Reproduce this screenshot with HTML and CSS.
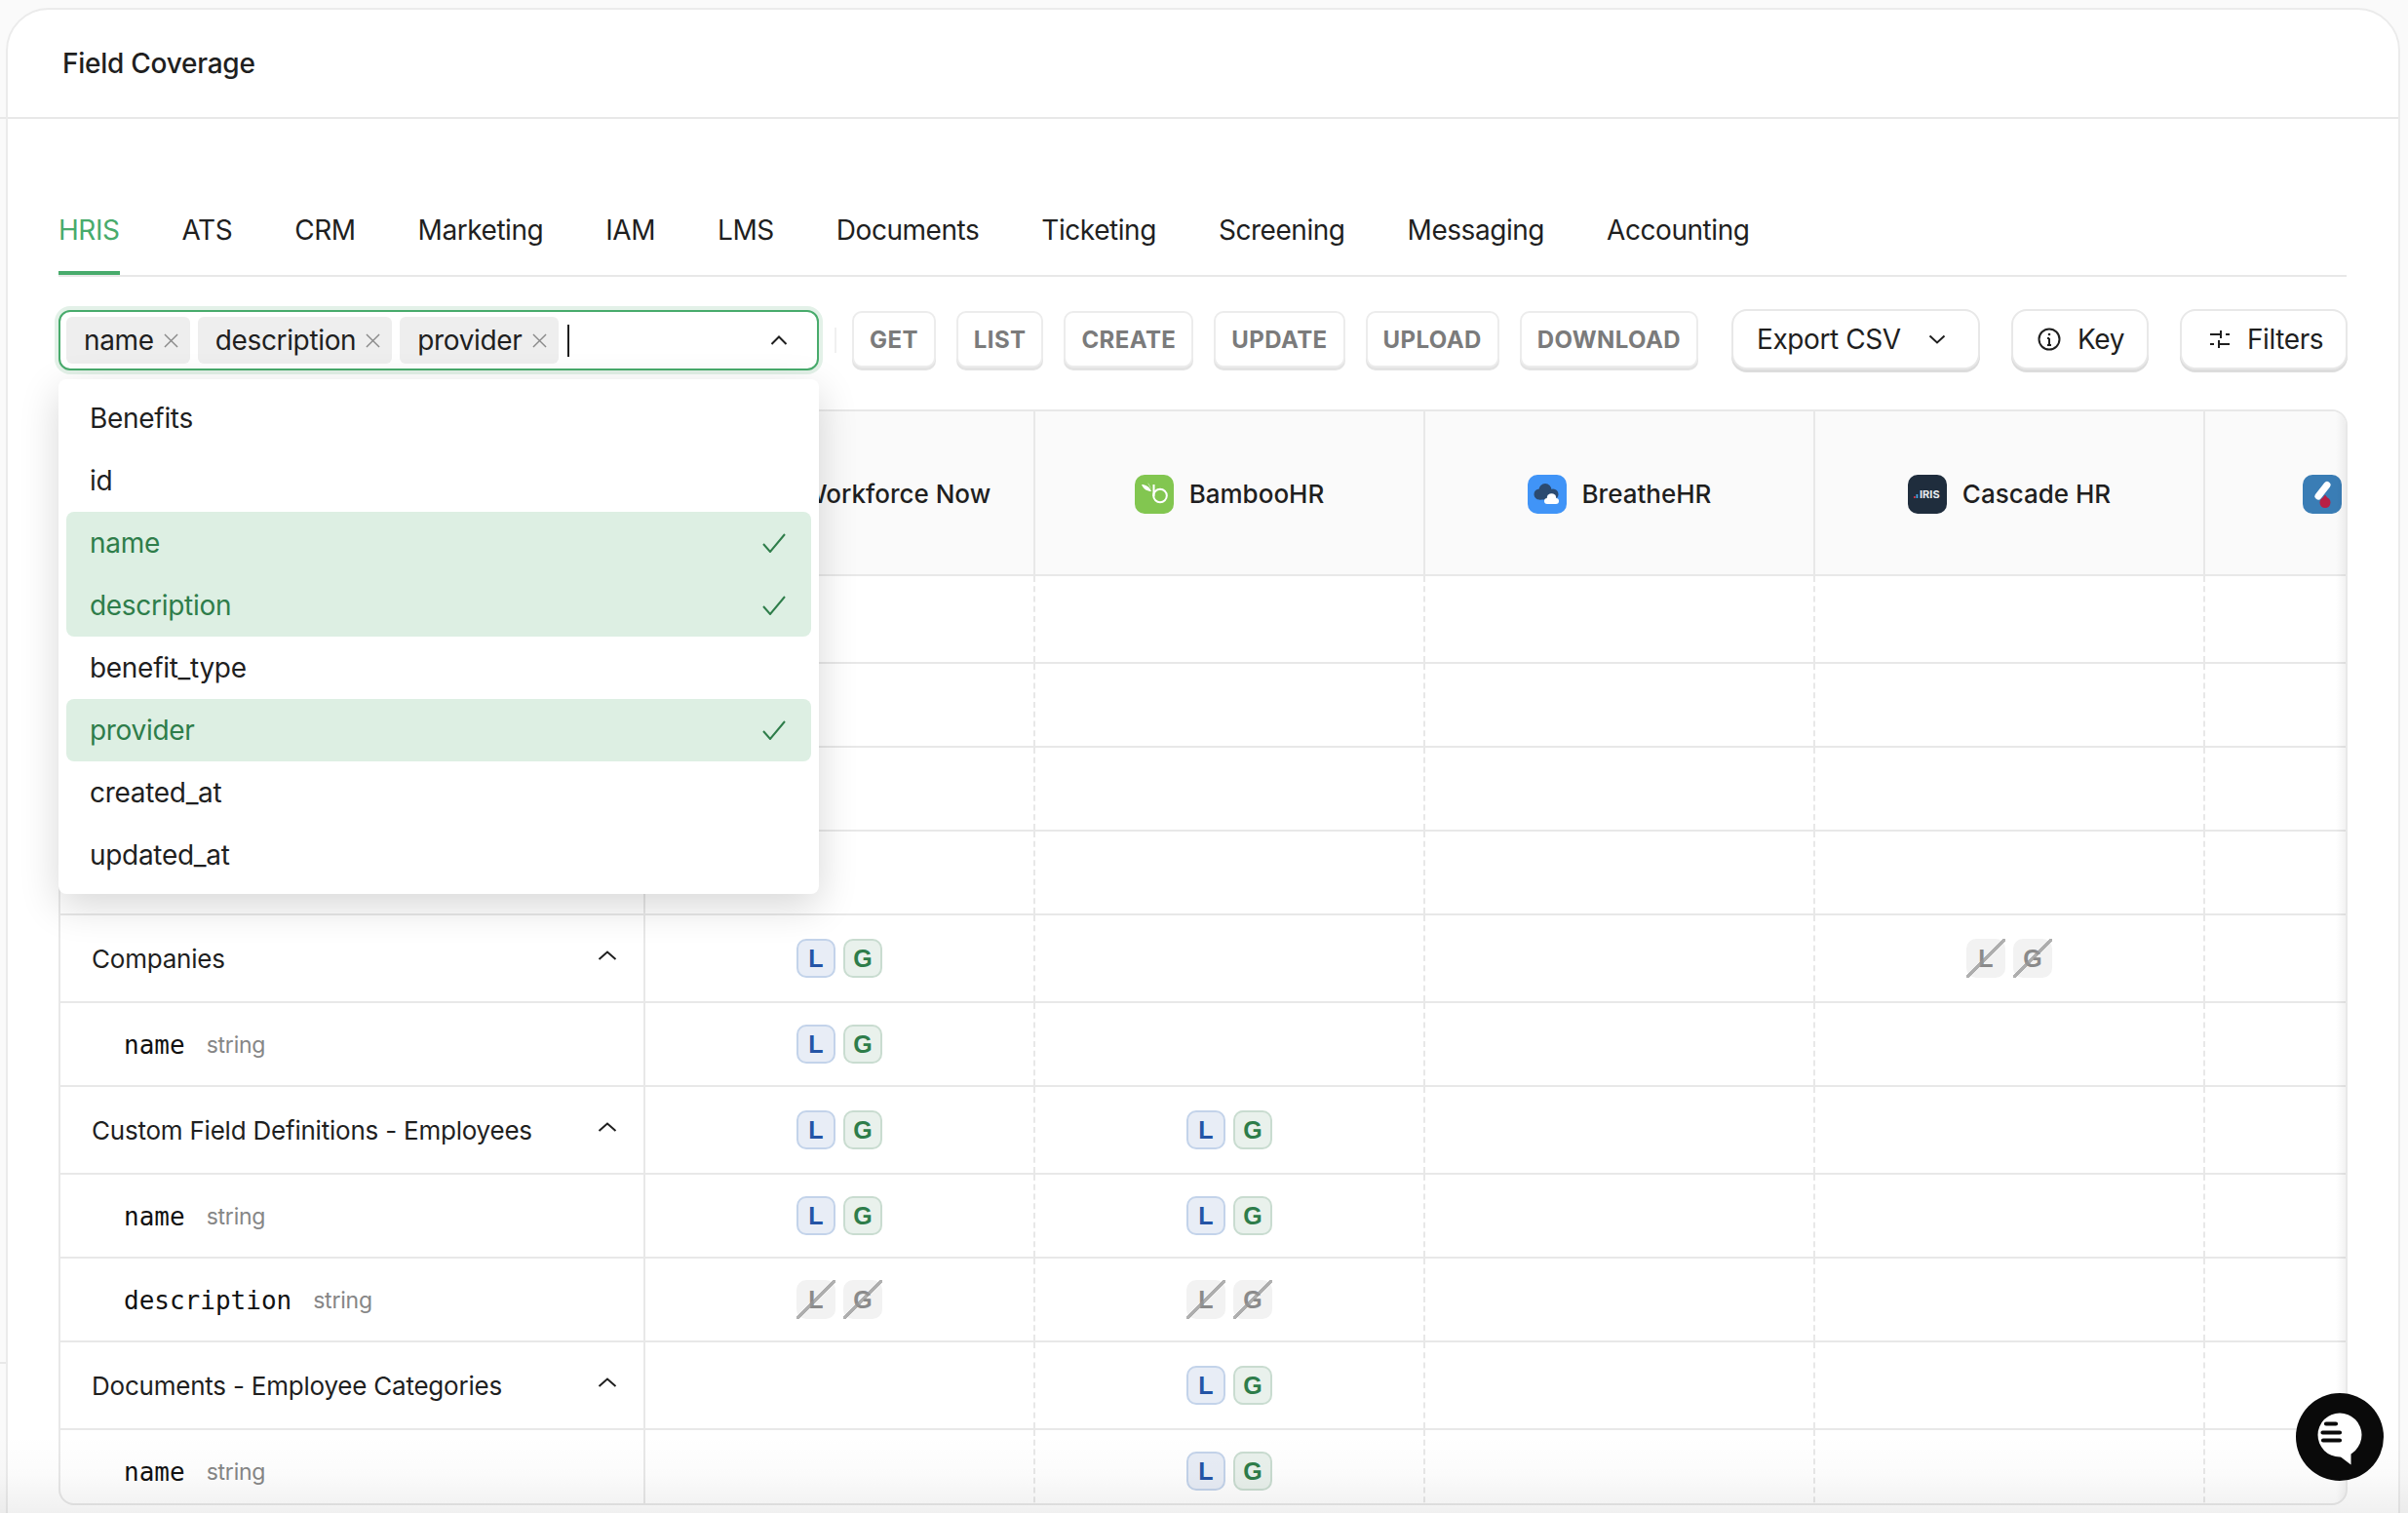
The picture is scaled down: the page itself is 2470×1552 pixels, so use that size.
FILE: index.html
```html
<!DOCTYPE html>
<html lang="en">
<head>
<meta charset="utf-8">
<title>Field Coverage</title>
<link rel="stylesheet" href="styles.css">
</head>
<body>
<div class="page">
  <div class="rail"><div class="rail-a"></div><div class="rail-b"></div></div>
  <main class="card">
    <header class="card-head"><h1 class="title">Field Coverage</h1></header>
    <section class="content">
      <nav class="tabs">
        <a class="tab active">HRIS</a><a class="tab">ATS</a><a class="tab">CRM</a><a class="tab">Marketing</a><a class="tab">IAM</a><a class="tab">LMS</a><a class="tab">Documents</a><a class="tab">Ticketing</a><a class="tab">Screening</a><a class="tab">Messaging</a><a class="tab">Accounting</a>
      </nav>
      <div class="toolbar">
        <div class="multi">
          <div class="input">
            <span class="tag">name<svg class="x" viewBox="0 0 16 16"><path d="M1 1l14 14M15 1L1 15"/></svg></span>
            <span class="tag">description<svg class="x" viewBox="0 0 16 16"><path d="M1 1l14 14M15 1L1 15"/></svg></span>
            <span class="tag">provider<svg class="x" viewBox="0 0 16 16"><path d="M1 1l14 14M15 1L1 15"/></svg></span>
            <span class="caret"></span>
            <svg class="input-chev" viewBox="0 0 18 10"><path d="M1.500 9L9 1.500 16.500 9"/></svg>
          </div>
          <ul class="menu">
            <li class="opt">Benefits</li>
            <li class="opt">id</li>
            <li class="opt sel first">name<svg class="check" viewBox="0 0 24 20"><path d="M1 11l7 8L23 1"/></svg></li>
            <li class="opt sel last">description<svg class="check" viewBox="0 0 24 20"><path d="M1 11l7 8L23 1"/></svg></li>
            <li class="opt">benefit_type</li>
            <li class="opt sel first last">provider<svg class="check" viewBox="0 0 24 20"><path d="M1 11l7 8L23 1"/></svg></li>
            <li class="opt">created_at</li>
            <li class="opt">updated_at</li>
          </ul>
        </div>
        <span class="sep"></span>
        <div class="methods">
          <button class="method">GET</button>
          <button class="method">LIST</button>
          <button class="method">CREATE</button>
          <button class="method">UPDATE</button>
          <button class="method">UPLOAD</button>
          <button class="method">DOWNLOAD</button>
        </div>
        <button class="action export">Export CSV<svg class="chev-down" viewBox="0 0 18 10"><path d="M1.500 1.500L9 8.500l7.500-7"/></svg></button>
        <button class="action key"><svg class="ico" viewBox="0 0 24 24"><circle cx="12" cy="12" r="10.500"/><path d="M12 11v7M10 11h2M10 18h4"/><circle class="dot" cx="12" cy="7" r="1.300"/></svg>Key</button>
        <button class="action filters"><svg class="ico" viewBox="0 0 24 24"><path d="M2 7h11M18 7h4M13 3v8M2 17h4M11 17h11M11 13v8"/></svg>Filters</button>
      </div>

      <div class="table">
        <div class="row head">
          <div class="cell first"></div>
          <div class="cell prov"><svg class="logo" viewBox="0 0 40 40"><rect width="40" height="40" rx="10" fill="#d0271d"/></svg>ADP Workforce Now</div>
          <div class="cell prov"><svg class="logo" viewBox="0 0 40 40"><rect width="40" height="40" rx="10" fill="#82c650"/><path d="M19.500 10v12" stroke="#fff" stroke-width="2" fill="none"/><circle cx="26" cy="21.500" r="6.800" stroke="#fff" stroke-width="2" fill="none"/><path d="M7 10c4 0 8 2 10 7-4 0-8-2-10-7zM13 8c2 2 3 4 4 7" fill="#fff"/></svg>BambooHR</div>
          <div class="cell prov"><svg class="logo" viewBox="0 0 40 40"><rect width="40" height="40" rx="10" fill="#4094f7"/><g fill="#2b4a70"><circle cx="18" cy="15.500" r="6.500"/><circle cx="12" cy="20" r="5.500"/><circle cx="26" cy="20" r="5.500"/><rect x="12" y="18" width="14" height="7.500"/></g><g fill="#fff"><circle cx="24.500" cy="24" r="4.800"/><circle cx="20" cy="27" r="3"/><circle cx="29" cy="27" r="3"/><rect x="20" y="26" width="9" height="4"/></g></svg>BreatheHR</div>
          <div class="cell prov"><svg class="logo" viewBox="0 0 40 40"><rect width="40" height="40" rx="10" fill="#1f2d3d"/><rect x="6" y="22" width="1.800" height="2" fill="#d0344a"/><rect x="8.500" y="20" width="1.800" height="4" fill="#4aa3df"/><text x="12" y="24" class="iris">IRIS</text></svg>Cascade HR</div>
          <div class="cell prov clipped"><svg class="logo" viewBox="0 0 40 40"><rect width="40" height="40" rx="10" fill="#3a7db5"/><path d="M25 10.500L16 22" stroke="#fff" stroke-width="7" stroke-linecap="round"/><circle cx="23" cy="28.500" r="5.500" fill="#b81f45"/><path d="M23 20.500l4.500 6h-9z" fill="#b81f45"/></svg></div>
        </div>

        <div class="row group"><div class="cell first"></div><div class="cell"></div><div class="cell"></div><div class="cell"></div><div class="cell"></div><div class="cell"></div></div>
        <div class="row field"><div class="cell first"></div><div class="cell"></div><div class="cell"></div><div class="cell"></div><div class="cell"></div><div class="cell"></div></div>
        <div class="row field"><div class="cell first"></div><div class="cell"></div><div class="cell"></div><div class="cell"></div><div class="cell"></div><div class="cell"></div></div>
        <div class="row field"><div class="cell first"></div><div class="cell"></div><div class="cell"></div><div class="cell"></div><div class="cell"></div><div class="cell"></div></div>

        <div class="row group"><div class="cell first">Companies<svg class="row-chev" viewBox="0 0 20 10"><path d="M1.500 9L10 1.500 18.500 9"/></svg></div>
          <div class="cell"><span class="badge l">L</span><span class="badge g">G</span></div><div class="cell"></div><div class="cell"></div>
          <div class="cell"><span class="badge off">L</span><span class="badge off">G</span></div><div class="cell"></div></div>
        <div class="row field"><div class="cell first"><code>name</code><span class="type">string</span></div>
          <div class="cell"><span class="badge l">L</span><span class="badge g">G</span></div><div class="cell"></div><div class="cell"></div><div class="cell"></div><div class="cell"></div></div>

        <div class="row group"><div class="cell first">Custom Field Definitions - Employees<svg class="row-chev" viewBox="0 0 20 10"><path d="M1.500 9L10 1.500 18.500 9"/></svg></div>
          <div class="cell"><span class="badge l">L</span><span class="badge g">G</span></div>
          <div class="cell"><span class="badge l">L</span><span class="badge g">G</span></div><div class="cell"></div><div class="cell"></div><div class="cell"></div></div>
        <div class="row field"><div class="cell first"><code>name</code><span class="type">string</span></div>
          <div class="cell"><span class="badge l">L</span><span class="badge g">G</span></div>
          <div class="cell"><span class="badge l">L</span><span class="badge g">G</span></div><div class="cell"></div><div class="cell"></div><div class="cell"></div></div>
        <div class="row field"><div class="cell first"><code>description</code><span class="type">string</span></div>
          <div class="cell"><span class="badge off">L</span><span class="badge off">G</span></div>
          <div class="cell"><span class="badge off">L</span><span class="badge off">G</span></div><div class="cell"></div><div class="cell"></div><div class="cell"></div></div>

        <div class="row group"><div class="cell first">Documents - Employee Categories<svg class="row-chev" viewBox="0 0 20 10"><path d="M1.500 9L10 1.500 18.500 9"/></svg></div>
          <div class="cell"></div>
          <div class="cell"><span class="badge l">L</span><span class="badge g">G</span></div><div class="cell"></div><div class="cell"></div><div class="cell"></div></div>
        <div class="row field"><div class="cell first"><code>name</code><span class="type">string</span></div>
          <div class="cell"></div>
          <div class="cell"><span class="badge l">L</span><span class="badge g">G</span></div><div class="cell"></div><div class="cell"></div><div class="cell"></div></div>
      </div>
    </section>
  </main>
</div>
<div class="fade"></div>
<button class="chat" aria-label="Chat">
  <svg viewBox="0 0 90 90" width="90" height="90"><circle cx="45" cy="45" r="45" fill="#0a0a0a"/><circle cx="45" cy="43" r="22.500" fill="#fff"/><path d="M44 64l12.500 9.500V58z" fill="#fff"/><path d="M31 31.500h10M27.500 40.500h17.500M28 48.500h17" stroke="#0a0a0a" stroke-width="4.200" stroke-linecap="round"/></svg>
</button>
</body>
</html>
```
FILE: styles.css
```css
* { box-sizing: border-box; }
html, body { margin: 0; height: 100%; }
body {
  width: 2470px;
  height: 1552px;
  overflow: hidden;
  background: #fafafa;
  color: #1f1f1f;
  font-family: Inter, "Liberation Sans", sans-serif;
  font-size: 28px;
  position: relative;
}
.page { display: flex; height: 1552px; }
.rail { width: 6px; flex: none; }
.rail-a { height: 122px; border-bottom: 2px solid #e8e8e8; }
.rail-b { height: 1277px; border-bottom: 2px solid #e8e8e8; }

.card {
  width: 2456px;
  height: 1620px;
  margin-top: 8px;
  flex: none;
  background: #fff;
  border: 2px solid #ebebeb;
  border-radius: 44px;
}
.card-head {
  height: 112px;
  border-bottom: 2px solid #e8e8e8;
  padding: 0 0 0 56px;
  display: flex;
  align-items: center;
}
.title { margin: 0; font-size: 28px; font-weight: 500; letter-spacing: -.25px; }

.content { padding: 94px 53px 0 52px; }

.tabs {
  display: flex;
  gap: 64px;
  border-bottom: 2px solid #e8e8e8;
}
.tab {
  height: 66px;
  line-height: 40px;
  color: #1f1f1f;
  letter-spacing: -.45px;
}
.tab.active {
  color: #48ab6c;
  border-bottom: 4px solid #48ab6c;
}

.toolbar {
  display: flex;
  align-items: center;
  margin-top: 33px;
  height: 64px;
}
.multi { position: relative; width: 780px; flex: none; }
.input {
  height: 62px;
  border: 2px solid #48ab6c;
  border-radius: 12px;
  box-shadow: 0 0 0 4px #e3f1e8;
  display: flex;
  align-items: center;
  padding: 0 6px;
  gap: 8px;
  background: #fff;
}
.tag {
  height: 48px;
  background: #eeeeee;
  border-radius: 6px;
  padding: 0 12px 0 18px;
  display: inline-flex;
  align-items: center;
  gap: 10px;
  white-space: nowrap;
  letter-spacing: -.35px;
}
.x { width: 15px; height: 15px; fill: none; stroke: #8a8a8a; stroke-width: 1.500; }
.caret { width: 2px; height: 33px; background: #1f1f1f; margin-left: 1px; }
.input-chev { width: 18px; height: 10px; margin-left: auto; margin-right: 24px; fill: none; stroke: #1f1f1f; stroke-width: 2; }

.menu {
  position: absolute;
  z-index: 5;
  top: 71px;
  left: 0;
  width: 780px;
  margin: 0;
  padding: 8px;
  list-style: none;
  background: #fff;
  border-radius: 8px;
  box-shadow: 0 12px 40px rgba(0,0,0,.16);
  letter-spacing: -.3px;
}
.opt {
  height: 64px;
  padding: 0 26px 0 24px;
  display: flex;
  align-items: center;
  justify-content: space-between;
}
.sel { background: #ddefe3; color: #2e7d4a; }
.sel.first { border-radius: 8px 8px 0 0; }
.sel.last { border-bottom-left-radius: 8px; border-bottom-right-radius: 8px; }
.check { width: 24px; height: 20px; fill: none; stroke: #2e7d4a; stroke-width: 2; }

.sep { width: 2px; height: 26px; background: #f0f0f0; margin: 0 16px; flex: none; }
.methods { display: flex; gap: 21px; margin-right: 34px; }
.method {
  height: 58px;
  padding: 0 16px;
  background: #fff;
  border: 2px solid #ececec;
  border-radius: 10px;
  box-shadow: 0 3px 0 #e3e3e3;
  color: #7b7b7b;
  font: 700 24px Inter, "Liberation Sans", sans-serif;
  letter-spacing: .4px;
  margin-bottom: 2px;
}
.action {
  height: 62px;
  background: #fff;
  border: 2px solid #e8e8e8;
  border-radius: 16px;
  box-shadow: 0 3px 0 #dcdcdc;
  color: #1f1f1f;
  font: 400 28px Inter, "Liberation Sans", sans-serif;
  letter-spacing: -.42px;
  display: inline-flex;
  align-items: center;
  margin-bottom: 2px;
  white-space: nowrap;
}
.export { width: 255px; padding: 0 0 0 24px; gap: 28px; margin-right: 32px; flex: none; }
.chev-down { width: 18px; height: 10px; fill: none; stroke: #1f1f1f; stroke-width: 2; }
.key { width: 141px; padding-left: 25px; gap: 17px; margin-right: 32px; flex: none; }
.filters { width: 172px; padding-left: 27px; gap: 16px; flex: none; }
.ico { width: 24px; height: 24px; fill: none; stroke: #1f1f1f; stroke-width: 2; flex: none; }
.ico .dot { fill: #1f1f1f; stroke: none; }

.table {
  margin-top: 39px;
  height: 1124px;
  width: 2348px;
  overflow: hidden;
  border: 2px solid #e8e8e8;
  border-radius: 16px;
  background: #fff;
  position: relative;
}
.table::after {
  content: "";
  position: absolute;
  top: 0; right: 0; bottom: 0;
  width: 10px;
  background: linear-gradient(to right, rgba(0,0,0,0), rgba(0,0,0,.05));
}
.row {
  display: grid;
  grid-template-columns: 600px repeat(5, 400px);
  width: 2600px;
  border-bottom: 2px solid #e8e8e8;
}
.row.head { height: 169px; background: #fafafa; }
.row.group { height: 90px; }
.row.field { height: 86px; }
.cell {
  display: flex;
  align-items: center;
  justify-content: center;
  gap: 8px;
  border-right: 2px dashed #e8e8e8;
  white-space: nowrap;
}
.cell.first {
  justify-content: flex-start;
  border-right: 2px solid #e8e8e8;
  padding: 0 27px 0 32px;
  font-size: 26px;
  letter-spacing: -.22px;
  gap: 0;
}
.row.head .cell { border-right-style: solid; padding-top: 2px; }
.prov { font-size: 26px; font-weight: 500; gap: 16px; }
.cell.clipped { justify-content: flex-start; padding-left: 100px; }
.logo { width: 40px; height: 40px; flex: none; }
.iris { font: 700 11px Inter, sans-serif; fill: #e8edf2; }
.row-chev { width: 20px; height: 10px; margin: 0 0 7px auto; fill: none; stroke: #1f1f1f; stroke-width: 2; }
.cell.first:has(code) { padding-left: 65px; padding-top: 1px; }
code { font: 26px "DejaVu Sans Mono", monospace; color: #111; letter-spacing: 0; }
.type { color: #868686; font-size: 23px; margin-left: 22px; }

.badge {
  position: relative;
  width: 40px;
  height: 40px;
  border-radius: 10px;
  border: 2px solid transparent;
  display: inline-flex;
  align-items: center;
  justify-content: center;
  font: 700 25px "Liberation Sans", sans-serif;
}
.badge.l { background: #e8edf6; border-color: #c3d3ea; color: #2454a6; }
.badge.g { background: #e9f1ec; border-color: #c9dcd0; color: #2e7d4a; }
.badge.off { background: #f2f2f2; border-color: #f2f2f2; color: #8a8a8a; }
.badge.off::after {
  content: "";
  position: absolute;
  inset: -2px;
  background: linear-gradient(to bottom right, transparent calc(50% - 1.6px), rgba(150,150,150,.75) calc(50% - 1.6px), rgba(150,150,150,.75) calc(50% + 1.6px), transparent calc(50% + 1.6px));
}

.fade {
  position: absolute;
  left: 0; right: 0; bottom: 0;
  height: 80px;
  background: linear-gradient(to bottom, rgba(0,0,0,0), rgba(0,0,0,.015) 50%, rgba(0,0,0,.06));
  pointer-events: none;
  z-index: 6;
}
.chat {
  position: absolute;
  left: 2355px;
  top: 1429px;
  width: 90px;
  height: 90px;
  padding: 0;
  border: 0;
  background: none;
  z-index: 7;
}
.chat svg { display: block; }
```
